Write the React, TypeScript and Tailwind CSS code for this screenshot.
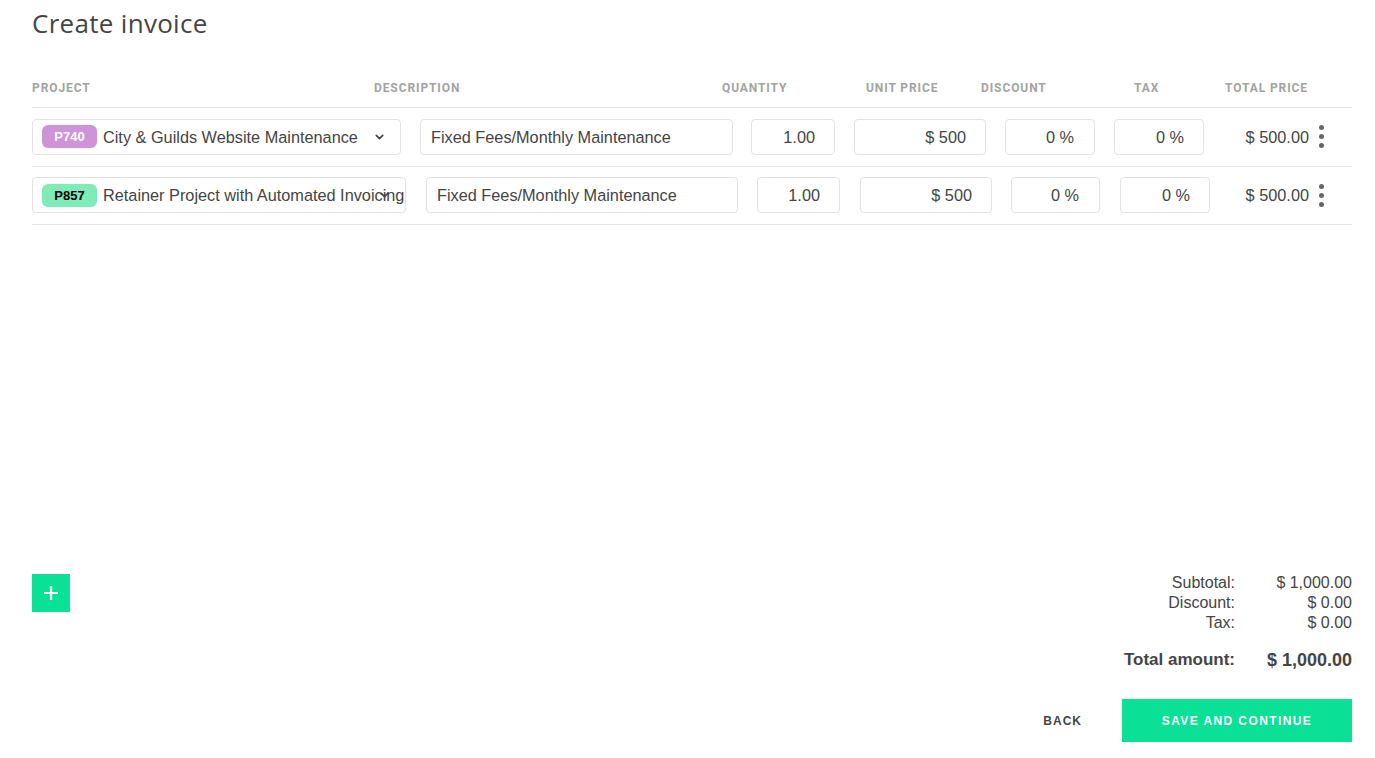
import { ChevronDown } from "lucide-react";

type Row = {
  code: string;
  badge: string;
  name: string;
  widths: string[];
  gaps: string[];
};

const rows: Row[] = [
  {
    code: "P740",
    badge: "bg-[#ce93d8] text-white",
    name: "City & Guilds Website Maintenance",
    widths: ["w-[369px]", "w-[313px]", "w-[84px]", "w-[132px]", "w-[90px]", "w-[90px]"],
    gaps: ["ml-[19px]", "ml-[18px]", "ml-[19px]", "ml-[19px]", "ml-[19px]"],
  },
  {
    code: "P857",
    badge: "bg-[#7eebb9] text-black",
    name: "Retainer Project with Automated Invoicing",
    widths: ["w-[374px]", "w-[312px]", "w-[83px]", "w-[132px]", "w-[89px]", "w-[90px]"],
    gaps: ["ml-[20px]", "ml-[19px]", "ml-[20px]", "ml-[19px]", "ml-[20px]"],
  },
];

function Dots() {
  return (
    <div className="flex flex-col items-center gap-[4px] w-[8px]">
      <span className="w-[5px] h-[5px] rounded-full bg-[#666]" />
      <span className="w-[5px] h-[5px] rounded-full bg-[#666]" />
      <span className="w-[5px] h-[5px] rounded-full bg-[#666]" />
    </div>
  );
}

function InvoiceRow({ row }: { row: Row }) {
  const [project, desc, qty, unit, disc, tax] = row.widths;
  const [g1, g2, g3, g4, g5] = row.gaps;
  const box = "h-[36px] border border-[#e3e3e3] rounded-[4px] flex items-center text-[16.3px] text-[#454545]";
  return (
    <div className="flex items-center h-[58.5px] border-b border-[#e6e6e6]">
      <div className={`${project} ${box} pl-[9px] relative overflow-hidden shrink-0`}>
        <span className={`${row.badge} w-[55px] h-[23px] rounded-[6px] flex items-center justify-center text-[13px] font-bold shrink-0`}>
          {row.code}
        </span>
        <span className="ml-[6px] whitespace-nowrap">{row.name}</span>
        <ChevronDown
          className="absolute right-[14px] top-1/2 -translate-y-1/2 w-[13px] h-[13px] text-[#444]"
          strokeWidth={3}
        />
      </div>
      <div className={`${desc} ${box} ${g1} pl-[10px] shrink-0`}>Fixed Fees/Monthly Maintenance</div>
      <div className={`${qty} ${box} ${g2} justify-end pr-[19px] shrink-0`}>1.00</div>
      <div className={`${unit} ${box} ${g3} justify-end pr-[19px] shrink-0`}>$ 500</div>
      <div className={`${disc} ${box} ${g4} justify-end pr-[20px] shrink-0`}>0 %</div>
      <div className={`${tax} ${box} ${g5} justify-end pr-[19px] shrink-0`}>0 %</div>
      <div className="flex-1 flex items-center justify-end gap-[8px] pr-[27px] text-[16.3px] text-[#454545]">
        <span>$ 500.00</span>
        <Dots />
      </div>
    </div>
  );
}

export default function App() {
  return (
    <div className="w-[1375px] h-[758px] bg-white px-[32px] pt-[8px] font-['Liberation_Sans',Arial,sans-serif] flex flex-col">
      <h1 className="text-[26px] text-[#454545] font-['Open_Sans',sans-serif] leading-[30px] tracking-[0.3px]">
        Create invoice
      </h1>

      <div className="w-[1320px] mt-[34px]">
        {/* Header */}
        <div className="flex items-center h-[36px] border-b border-[#e6e6e6] text-[12px] font-bold tracking-[0.9px] text-[#a3a3a3] font-['Roboto',sans-serif] pb-[4px]">
          <div className="w-[342px]">PROJECT</div>
          <div className="w-[348px]">DESCRIPTION</div>
          <div className="w-[144px]">QUANTITY</div>
          <div className="w-[115px]">UNIT PRICE</div>
          <div className="w-[153px]">DISCOUNT</div>
          <div className="w-[91px]">TAX</div>
          <div>TOTAL PRICE</div>
        </div>
        {rows.map((row) => (
          <InvoiceRow key={row.code} row={row} />
        ))}
      </div>

      <div className="flex-1" />

      <div className="w-[1320px] flex justify-between items-start">
        <button className="w-[38px] h-[38px] bg-[#0be097] flex items-center justify-center mt-[1px]">
          <svg width="16" height="16" viewBox="0 0 16 16">
            <path d="M8 1v14M1 8h14" stroke="white" strokeWidth="2.2" />
          </svg>
        </button>
        <div className="flex flex-col items-end">
          <div className="grid grid-cols-[auto_117px] text-[16px] text-[#454545] leading-[20px] text-right">
            <span>Subtotal:</span>
            <span>$ 1,000.00</span>
            <span>Discount:</span>
            <span>$ 0.00</span>
            <span>Tax:</span>
            <span>$ 0.00</span>
            <span className="font-bold text-[17px] mt-[17px]">Total amount:</span>
            <span className="font-bold text-[18px] mt-[17px]">$ 1,000.00</span>
          </div>
          <div className="flex items-center mt-[29px] mb-[16px]">
            <button className="text-[12px] font-bold tracking-[1px] text-[#454545] mr-[40px]">BACK</button>
            <button className="w-[230px] h-[43px] bg-[#0be097] text-white text-[12px] font-bold tracking-[1.4px]">
              SAVE AND CONTINUE
            </button>
          </div>
        </div>
      </div>
    </div>
  );
}
